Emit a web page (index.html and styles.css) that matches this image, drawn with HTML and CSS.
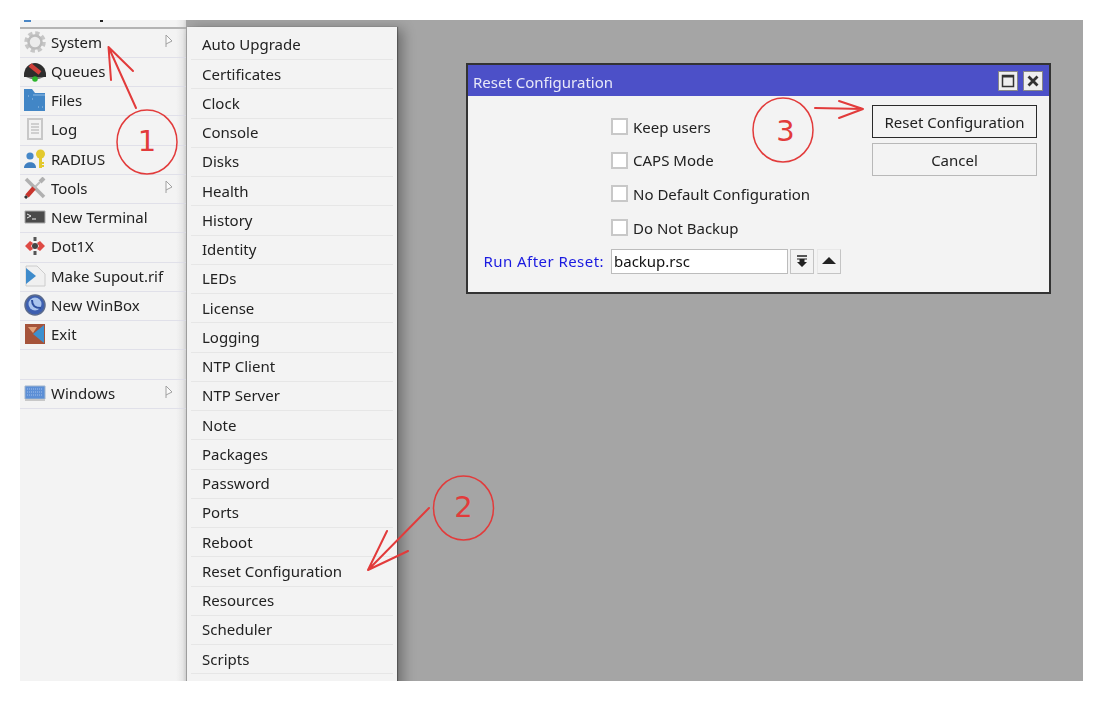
FILE: index.html
```html
<!DOCTYPE html>
<html lang="en">
<head>
<meta charset="utf-8">
<title>Reset Configuration</title>
<link rel="stylesheet" href="styles.css">
</head>
<body>
<div class="stage">
  <nav class="sidebar">
    <div class="clipped-row"><i class="bit-blue"></i><i class="bit-dark"></i></div>
    <div class="row"><svg class="ico" viewBox="0 0 22 22"><circle cx="11" cy="11" r="8.500" fill="none" stroke="#c6c6c6" stroke-width="4.500" stroke-dasharray="4 2.670"/><circle cx="11" cy="11" r="6.500" fill="#ececec" stroke="#bcbcbc" stroke-width="2.500"/></svg><span>System</span><svg class="more" viewBox="0 0 8 14"><path d="M1 1v12M1 1l6 6-6 3" fill="#fafafa" stroke="#a0a0a0" stroke-width="1"/></svg></div>
    <div class="row"><svg class="ico" viewBox="0 0 22 22"><path d="M0 15a11 12 0 0 1 22 0v2H0z" fill="#2d2d2d"/><path d="M6 5l10 8" stroke="#cf3f39" stroke-width="4.500"/><path d="M2 17h18l-5 2H7z" fill="#777"/><circle cx="11" cy="19" r="2.800" fill="#2cb52c"/></svg><span>Queues</span></div>
    <div class="row"><svg class="ico" viewBox="0 0 22 22"><path d="M0 0h8l3 4h10v18H0z" fill="#4286c6"/><path d="M9 6h12" stroke="#8fbbe4"/><path d="M4 7h1M8 10h1M14 18h1M18 18h1" stroke="#a5c8ea"/></svg><span>Files</span></div>
    <div class="row"><svg class="ico" viewBox="0 0 22 22"><path d="M4 1h14v20H4z" fill="#f2f2f2" stroke="#c8c8c8" stroke-width="2"/><path d="M7 6h8M7 9h8M7 12h8M7 15h8" stroke="#c4c4c4" stroke-width="1.600"/></svg><span>Log</span></div>
    <div class="row"><svg class="ico" viewBox="0 0 22 22"><circle cx="6" cy="8" r="3.600" fill="#4688c8"/><path d="M0 20c0-7 12-8 12 0z" fill="#3f7fc0"/><circle cx="16.500" cy="6" r="4.500" fill="#e3c92e"/><path d="M15 9h3v11h-3z" fill="#e3c92e"/><path d="M18 14h2v2h-2zM18 17h2v2h-2z" fill="#e3c92e"/></svg><span>RADIUS</span></div>
    <div class="row"><svg class="ico" viewBox="0 0 22 22"><path d="M2 2l18 18" stroke="#b0b0b0" stroke-width="3.500"/><path d="M20 1l-4 4" stroke="#b0b0b0" stroke-width="4"/><path d="M16 5l-6 6" stroke="#bcbcbc" stroke-width="2"/><path d="M10 11l-7 8" stroke="#c9352d" stroke-width="4.500"/><path d="M1 21l2-2" stroke="#333" stroke-width="3"/></svg><span>Tools</span><svg class="more" viewBox="0 0 8 14"><path d="M1 1v12M1 1l6 6-6 3" fill="#fafafa" stroke="#a0a0a0" stroke-width="1"/></svg></div>
    <div class="row"><svg class="ico" viewBox="0 0 22 22"><path d="M1 5h20v12H1z" fill="#4a4a4a" stroke="#aaa"/><path d="M3 8l4 2-4 2M8 13h4" fill="none" stroke="#eee"/></svg><span>New Terminal</span></div>
    <div class="row"><svg class="ico" viewBox="0 0 22 22"><path d="M6 6l-5 5 5 5 3-2-2-3 2-3zM16 6l5 5-5 5-3-2 2-3-2-3z" fill="#de4a44"/><circle cx="11" cy="11" r="3" fill="#444"/><path d="M11 2v4M11 16v4" stroke="#555" stroke-width="3"/></svg><span>Dot1X</span></div>
    <div class="row"><svg class="ico" viewBox="0 0 22 22"><path d="M2 1h11l8 8v12H2z" fill="#f0f0f0" stroke="#ccc"/><path d="M2 3l10 8-10 8z" fill="#3e8bcb"/></svg><span>Make Supout.rif</span></div>
    <div class="row"><svg class="ico" viewBox="0 0 22 22"><circle cx="11" cy="11" r="10" fill="#3d5fb0" stroke="#5b6b8c" stroke-width="1.500"/><circle cx="11" cy="10" r="6.500" fill="#a9c4ee"/><path d="M8 6c0 6 3 8 9 8" fill="none" stroke="#2d4f9f" stroke-width="2"/></svg><span>New WinBox</span></div>
    <div class="row"><svg class="ico" viewBox="0 0 22 22"><path d="M1 1h20v20H1z" fill="#a5533a"/><path d="M4 4h9l-4 6z" fill="#e2a27a"/><path d="M20 2v18L9 11z" fill="#3d90cf"/></svg><span>Exit</span></div>
    <div class="row"></div>
    <div class="row"><svg class="ico" viewBox="0 0 22 22"><path d="M1 4h20v13H1z" fill="#5c8fd6" stroke="#9fb4cc"/><path d="M3 7h16M3 10h16M3 13h16" stroke="#a3c0ea" stroke-dasharray="1 1"/><path d="M1 18h20" stroke="#c8c8c8" stroke-width="2"/></svg><span>Windows</span><svg class="more" viewBox="0 0 8 14"><path d="M1 1v12M1 1l6 6-6 3" fill="#fafafa" stroke="#a0a0a0" stroke-width="1"/></svg></div>
  </nav>

  <main class="desktop">
    <section class="window">
      <header class="titlebar">
        <span class="title">Reset Configuration</span>
        <button class="win-btn"><svg viewBox="0 0 14 14"><path d="M1.500 1.500h11v11h-11z" fill="none" stroke="#333" stroke-width="1.500"/><path d="M1.500 2.500h11" stroke="#333" stroke-width="2"/></svg></button>
        <button class="win-btn"><svg viewBox="0 0 14 14"><path d="M2.500 2.500l9 9M11.500 2.500l-9 9" stroke="#333" stroke-width="2.800"/></svg></button>
      </header>
      <div class="win-body">
        <div class="form">
          <span></span><label class="check"><i class="box"></i>Keep users</label>
          <span></span><label class="check"><i class="box"></i>CAPS Mode</label>
          <span></span><label class="check"><i class="box"></i>No Default Configuration</label>
          <span></span><label class="check"><i class="box"></i>Do Not Backup</label>
          <span class="field-label">Run After Reset:</span>
          <div class="field">
            <div class="input">backup.rsc</div>
            <button class="mini framed"><svg viewBox="0 0 14 14"><path d="M2 2h10" stroke="#222" stroke-width="1.500"/><path d="M2 5h10M5 5v3h4V5" stroke="#222"/><path d="M5 5h4v3h3l-5 5-5-5h3z" fill="#222"/></svg></button>
            <button class="mini"><svg viewBox="0 0 14 14"><path d="M7 3l7 7H0z" fill="#222"/></svg></button>
          </div>
        </div>
        <div class="actions">
          <button class="action primary">Reset Configuration</button>
          <button class="action">Cancel</button>
        </div>
      </div>
    </section>
  </main>

  <div class="submenu">
    <div class="sub-row">Auto Upgrade</div>
    <div class="sub-row">Certificates</div>
    <div class="sub-row">Clock</div>
    <div class="sub-row">Console</div>
    <div class="sub-row">Disks</div>
    <div class="sub-row">Health</div>
    <div class="sub-row">History</div>
    <div class="sub-row">Identity</div>
    <div class="sub-row">LEDs</div>
    <div class="sub-row">License</div>
    <div class="sub-row">Logging</div>
    <div class="sub-row">NTP Client</div>
    <div class="sub-row">NTP Server</div>
    <div class="sub-row">Note</div>
    <div class="sub-row">Packages</div>
    <div class="sub-row">Password</div>
    <div class="sub-row">Ports</div>
    <div class="sub-row">Reboot</div>
    <div class="sub-row">Reset Configuration</div>
    <div class="sub-row">Resources</div>
    <div class="sub-row">Scheduler</div>
    <div class="sub-row">Scripts</div>
    <div class="sub-row"></div>
  </div>
</div>

<svg class="notes" viewBox="0 0 1103 701">
  <g fill="none" stroke="#e23b3b" stroke-width="2" stroke-linecap="round" stroke-linejoin="round">
    <ellipse cx="147" cy="142" rx="30" ry="32" stroke-width="1.500"/>
    <ellipse cx="463.500" cy="508" rx="30" ry="32" stroke-width="1.500"/>
    <ellipse cx="783" cy="130" rx="30" ry="32" stroke-width="1.500"/>
    <path d="M136 108L108.500 47M111 80L108.500 47L133 71"/>
    <path d="M429 508L368 570M387 531L368 570L408 551"/>
    <path d="M815 108L863 109M839 101L863 109L839 118"/>
  </g>
  <g class="note-num">
    <text x="147" y="151">1</text>
    <text x="463.500" y="517">2</text>
    <text x="785.500" y="141">3</text>
  </g>
</svg>
</body>
</html>
```

FILE: styles.css
```css
* { box-sizing: border-box; }

html, body { margin: 0; height: 100%; background: #fff; }

body {
  position: relative;
  width: 1103px;
  height: 701px;
  overflow: hidden;
  font: 15px "Noto Sans", "Open Sans", sans-serif;
  color: #222;
}

.stage {
  position: relative;
  display: flex;
  width: 1063px;
  height: 661px;
  margin: 20px 0 0 20px;
  overflow: hidden;
  filter: blur(0.4px);
}

.sidebar {
  flex: 0 0 166px;
  background: linear-gradient(90deg, #f3f3f3 0, #f3f3f3 156px, #e8e8e8 163px, #d8d8d8 166px);
}

.clipped-row {
  display: flex;
  height: 8.5px;
  border-bottom: 2px solid #b4b4b4;
  padding-left: 4px;
}

.bit-blue { width: 7px; height: 2px; background: #4a86c5; }
.bit-dark { width: 3px; height: 2px; margin-left: 69px; background: #222; }

.row {
  display: flex;
  align-items: center;
  height: 29.25px;
  padding-left: 4px;
  border-bottom: 1px solid #e0e0e9;
}

.row span { flex: 1; margin-top: -2px; }

.ico { flex: 0 0 22px; width: 22px; height: 22px; margin: -2px 5px 0 0; }

.more { flex: 0 0 8px; width: 8px; height: 14px; margin: -4px 13px 0 0; }

.desktop {
  position: relative;
  flex: 1;
  background: #a5a5a5;
}

.window {
  position: absolute;
  left: 280px;
  top: 43px;
  display: flex;
  flex-direction: column;
  width: 585px;
  height: 231px;
  background: #f3f3f3;
  border: 2px solid #333;
}

.titlebar {
  display: flex;
  align-items: center;
  gap: 5px;
  height: 31px;
  padding: 0 6px 0 5px;
  background: #4c50c8;
  color: #e8e8f8;
}

.title { flex: 1; padding-top: 3px; }

.win-btn {
  display: flex;
  align-items: center;
  justify-content: center;
  width: 20px;
  height: 20px;
  padding: 0;
  background: #efefef;
  border: 1px solid #888;
}

.win-btn svg { width: 14px; height: 14px; }

.win-body { flex: 1; display: flex; }

.form {
  flex: 1;
  display: grid;
  grid-template-columns: 136px 1fr;
  grid-auto-rows: 33.6px;
  column-gap: 7px;
  align-items: center;
  align-content: start;
  padding-top: 14px;
}

.check { display: flex; align-items: center; gap: 5px; line-height: 18px; }

.box {
  width: 17px;
  height: 17px;
  background: #fff;
  border: 2px solid #c8c8c8;
}

.field-label { text-align: right; color: #1a1ae0; letter-spacing: 0.45px; }

.field { display: flex; align-items: center; }

.input {
  width: 177px;
  height: 25px;
  padding-left: 2px;
  line-height: 22px;
  background: #fff;
  border: 1px solid #bcbcbc;
  color: #111;
}

.mini {
  display: flex;
  align-items: center;
  justify-content: center;
  width: 24px;
  height: 25px;
  margin-left: 3px;
  padding: 0;
  background: #f3f3f3;
  border: 1px solid #e8e8e8;
  border-bottom-color: #c4c4c4;
  border-right-color: #c4c4c4;
}

.mini.framed { margin-left: 2px; border-color: #c4c4c4; }

.mini svg { width: 14px; height: 14px; }

.actions {
  flex: 0 0 165px;
  display: flex;
  flex-direction: column;
  gap: 5px;
  margin-right: 12px;
  padding-top: 9px;
}

.action {
  height: 33px;
  padding: 0;
  background: #f3f3f3;
  border: 1.500px solid #b8b8b8;
  font: inherit;
  color: #222;
}

.action.primary { border-color: #2a2a2a; }

.submenu {
  position: absolute;
  left: 167px;
  top: 7px;
  width: 210px;
  padding: 3.750px 4px 0;
  background: #f3f3f3;
  box-shadow: 6px 2px 12px rgba(0, 0, 0, 0.32), 1px 0 1px rgba(0, 0, 0, 0.3);
}

.sub-row {
  display: flex;
  align-items: center;
  height: 29.25px;
  padding: 0 0 1px 11px;
  border-bottom: 1.500px solid #e6e6e6;
}

.notes {
  position: absolute;
  left: 0;
  top: 0;
  width: 1103px;
  height: 701px;
  pointer-events: none;
}

.note-num text {
  font: 29px "DejaVu Sans", sans-serif;
  fill: #e23b3b;
  text-anchor: middle;
}
```
